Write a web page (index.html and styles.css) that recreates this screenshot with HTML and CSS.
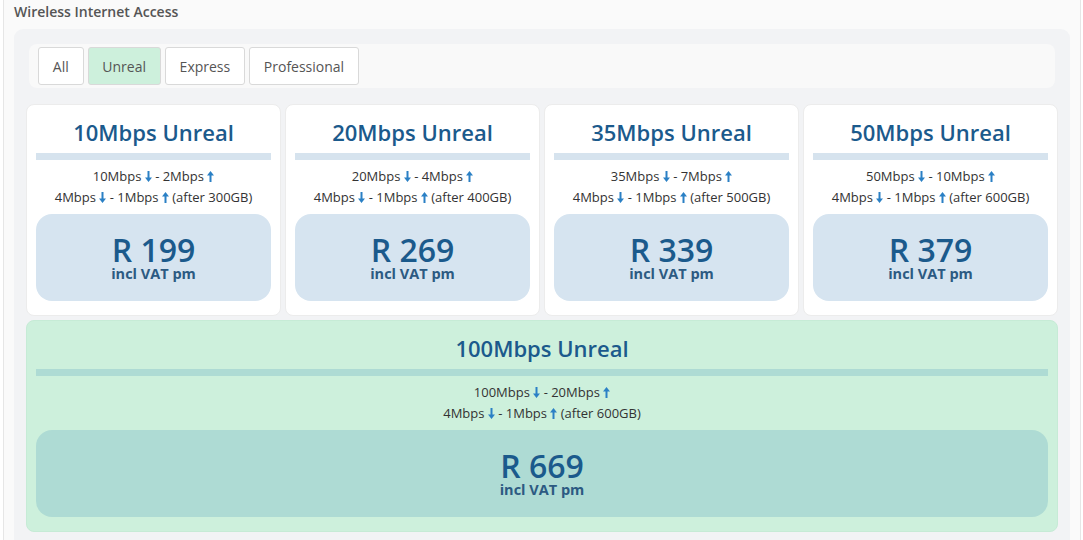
FILE: index.html
```html
<!DOCTYPE html>
<html>
<head>
<meta charset="utf-8">
<link rel="stylesheet" href="styles.css">
</head>
<body>
<div class="panel">
  <div class="panel-title">Wireless Internet Access</div>
  <div class="inner">
    <div class="filters">
      <button class="btn">All</button>
      <button class="btn active">Unreal</button>
      <button class="btn">Express</button>
      <button class="btn">Professional</button>
    </div>
    <div class="grid">
      <div class="card">
        <div class="card-title">10Mbps Unreal</div>
        <div class="bar"></div>
        <div class="speeds">
          <div>10Mbps <svg class="ar" viewBox="0 0 7 11"><path d="M2.5 0h2v6.5H7L3.5 11 0 6.5h2.5z"/></svg> - 2Mbps <svg class="ar" viewBox="0 0 7 11"><path d="M2.5 11h2V4.5H7L3.5 0 0 4.5h2.5z"/></svg></div>
          <div>4Mbps <svg class="ar" viewBox="0 0 7 11"><path d="M2.5 0h2v6.5H7L3.5 11 0 6.5h2.5z"/></svg> - 1Mbps <svg class="ar" viewBox="0 0 7 11"><path d="M2.5 11h2V4.5H7L3.5 0 0 4.5h2.5z"/></svg> (after 300GB)</div>
        </div>
        <div class="price"><div class="amount">R 199</div><div class="vat">incl VAT pm</div></div>
      </div>
      <div class="card">
        <div class="card-title">20Mbps Unreal</div>
        <div class="bar"></div>
        <div class="speeds">
          <div>20Mbps <svg class="ar" viewBox="0 0 7 11"><path d="M2.5 0h2v6.5H7L3.5 11 0 6.5h2.5z"/></svg> - 4Mbps <svg class="ar" viewBox="0 0 7 11"><path d="M2.5 11h2V4.5H7L3.5 0 0 4.5h2.5z"/></svg></div>
          <div>4Mbps <svg class="ar" viewBox="0 0 7 11"><path d="M2.5 0h2v6.5H7L3.5 11 0 6.5h2.5z"/></svg> - 1Mbps <svg class="ar" viewBox="0 0 7 11"><path d="M2.5 11h2V4.5H7L3.5 0 0 4.5h2.5z"/></svg> (after 400GB)</div>
        </div>
        <div class="price"><div class="amount">R 269</div><div class="vat">incl VAT pm</div></div>
      </div>
      <div class="card">
        <div class="card-title">35Mbps Unreal</div>
        <div class="bar"></div>
        <div class="speeds">
          <div>35Mbps <svg class="ar" viewBox="0 0 7 11"><path d="M2.5 0h2v6.5H7L3.5 11 0 6.5h2.5z"/></svg> - 7Mbps <svg class="ar" viewBox="0 0 7 11"><path d="M2.5 11h2V4.5H7L3.5 0 0 4.5h2.5z"/></svg></div>
          <div>4Mbps <svg class="ar" viewBox="0 0 7 11"><path d="M2.5 0h2v6.5H7L3.5 11 0 6.5h2.5z"/></svg> - 1Mbps <svg class="ar" viewBox="0 0 7 11"><path d="M2.5 11h2V4.5H7L3.5 0 0 4.5h2.5z"/></svg> (after 500GB)</div>
        </div>
        <div class="price"><div class="amount">R 339</div><div class="vat">incl VAT pm</div></div>
      </div>
      <div class="card">
        <div class="card-title">50Mbps Unreal</div>
        <div class="bar"></div>
        <div class="speeds">
          <div>50Mbps <svg class="ar" viewBox="0 0 7 11"><path d="M2.5 0h2v6.5H7L3.5 11 0 6.5h2.5z"/></svg> - 10Mbps <svg class="ar" viewBox="0 0 7 11"><path d="M2.5 11h2V4.5H7L3.5 0 0 4.5h2.5z"/></svg></div>
          <div>4Mbps <svg class="ar" viewBox="0 0 7 11"><path d="M2.5 0h2v6.5H7L3.5 11 0 6.5h2.5z"/></svg> - 1Mbps <svg class="ar" viewBox="0 0 7 11"><path d="M2.5 11h2V4.5H7L3.5 0 0 4.5h2.5z"/></svg> (after 600GB)</div>
        </div>
        <div class="price"><div class="amount">R 379</div><div class="vat">incl VAT pm</div></div>
      </div>
      <div class="card wide">
        <div class="card-title">100Mbps Unreal</div>
        <div class="bar"></div>
        <div class="speeds">
          <div>100Mbps <svg class="ar" viewBox="0 0 7 11"><path d="M2.5 0h2v6.5H7L3.5 11 0 6.5h2.5z"/></svg> - 20Mbps <svg class="ar" viewBox="0 0 7 11"><path d="M2.5 11h2V4.5H7L3.5 0 0 4.5h2.5z"/></svg></div>
          <div>4Mbps <svg class="ar" viewBox="0 0 7 11"><path d="M2.5 0h2v6.5H7L3.5 11 0 6.5h2.5z"/></svg> - 1Mbps <svg class="ar" viewBox="0 0 7 11"><path d="M2.5 11h2V4.5H7L3.5 0 0 4.5h2.5z"/></svg> (after 600GB)</div>
        </div>
        <div class="price"><div class="amount">R 669</div><div class="vat">incl VAT pm</div></div>
      </div>
    </div>
  </div>
</div>
</body>
</html>
```

FILE: styles.css
```css
* { box-sizing: border-box; }
html, body { margin: 0; padding: 0; background: #ffffff; }
body {
  font-family: "Open Sans", "Noto Sans", sans-serif;
  color: #333;
  overflow: hidden;
}
.panel {
  margin-left: 3px;
  width: 1078px;
  min-height: 560px;
  background: #fafafa;
  border-left: 1px solid #e6e6e6;
  border-right: 1px solid #e6e6e6;
  padding: 2px 10px 0 10px;
}
.panel-title {
  font-size: 14px;
  font-weight: 600;
  color: #555;
  line-height: 20px;
  height: 27px;
}
.inner {
  background: #f2f3f5;
  border-radius: 9px;
  padding: 15px 12px 12px 12px;
  min-height: 520px;
}
.filters {
  background: #f9f9f9;
  border-radius: 8px;
  margin: 0 3px;
  height: 44px;
  padding: 3px 9px;
  display: flex;
  gap: 4px;
}
.btn {
  font-family: "Open Sans", "Noto Sans", sans-serif;
  font-size: 14px;
  color: #555;
  background: #fff;
  border: 1px solid #d9d9d9;
  border-radius: 3px;
  height: 38px;
  padding: 0 13.8px;
  cursor: pointer;
}
.btn.active { background: #cdf0dc; }
.grid {
  margin-top: 16px;
  display: grid;
  grid-template-columns: repeat(4, 255px);
  gap: 4px;
}
.card {
  background: #fff;
  border: 1px solid #ececec;
  border-radius: 8px;
  padding: 12px 9px 14px 9px;
  text-align: center;
}
.card.wide {
  grid-column: 1 / -1;
  background: #cdf0dc;
  border-color: #c6ebd6;
}
.card-title {
  font-size: 22px;
  font-weight: 600;
  color: #1b5a8c;
  line-height: 30px;
  margin-bottom: 6px;
}
.bar {
  height: 7px;
  background: #d6e3ee;
  margin-bottom: 6px;
}
.wide .bar { background: #aedbd4; }
.speeds {
  font-size: 13px;
  color: #333;
  line-height: 21px;
  margin-bottom: 6px;
}
.speeds > div { height: 21px; }
.ar {
  width: 7px;
  height: 11px;
  fill: #2b80c5;
  vertical-align: -1px;
}
.price {
  background: #d6e4f0;
  border-radius: 16px;
  padding: 19px 0 20px 0;
}
.wide .price { background: #aedbd4; }
.amount {
  font-size: 32px;
  font-weight: 600;
  color: #1b5a8c;
  line-height: 34px;
}
.vat {
  font-size: 14.5px;
  font-weight: 700;
  color: #2c5a82;
  line-height: 14px;
}
```
